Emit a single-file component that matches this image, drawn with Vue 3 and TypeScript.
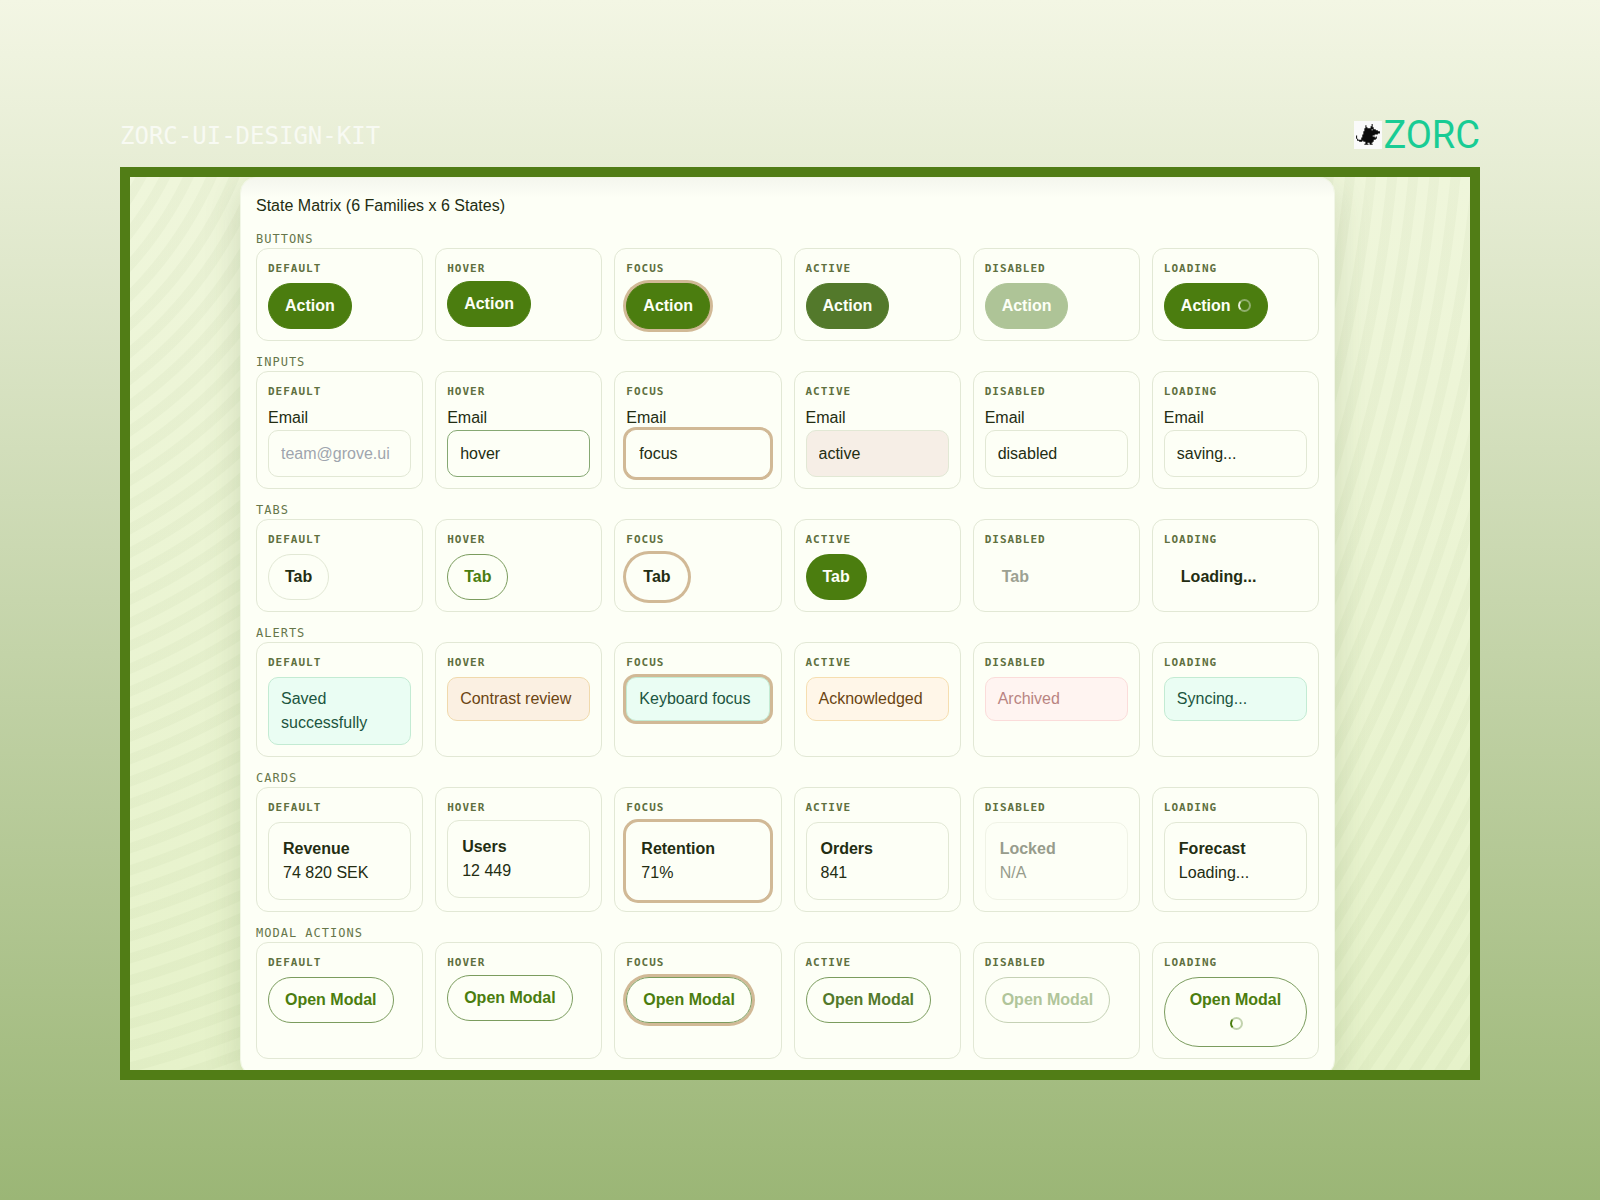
<script setup lang="ts">
type State = 'default' | 'hover' | 'focus' | 'active' | 'disabled' | 'loading'
type Kind = 'button' | 'input' | 'tab' | 'alert' | 'card' | 'modal'

interface Item {
  text: string
  tone?: string
  value?: string
}

interface Family {
  title: string
  kind: Kind
  items: Item[]
}

const states: State[] = ['default', 'hover', 'focus', 'active', 'disabled', 'loading']

const families: Family[] = [
  { title: 'Buttons', kind: 'button', items: states.map(() => ({ text: 'Action' })) },
  {
    title: 'Inputs',
    kind: 'input',
    items: ['', 'hover', 'focus', 'active', 'disabled', 'saving...'].map((value) => ({ text: 'Email', value })),
  },
  {
    title: 'Tabs',
    kind: 'tab',
    items: ['Tab', 'Tab', 'Tab', 'Tab', 'Tab', 'Loading...'].map((text) => ({ text })),
  },
  {
    title: 'Alerts',
    kind: 'alert',
    items: [
      { text: 'Saved successfully', tone: 'success' },
      { text: 'Contrast review', tone: 'warning' },
      { text: 'Keyboard focus', tone: 'success' },
      { text: 'Acknowledged', tone: 'warning' },
      { text: 'Archived', tone: 'danger' },
      { text: 'Syncing...', tone: 'success' },
    ],
  },
  {
    title: 'Cards',
    kind: 'card',
    items: [
      { text: 'Revenue', value: '74 820 SEK' },
      { text: 'Users', value: '12 449' },
      { text: 'Retention', value: '71%' },
      { text: 'Orders', value: '841' },
      { text: 'Locked', value: 'N/A' },
      { text: 'Forecast', value: 'Loading...' },
    ],
  },
  { title: 'Modal Actions', kind: 'modal', items: states.map(() => ({ text: 'Open Modal' })) },
]
</script>

<template>
  <main class="page">
    <header class="top">
      <span class="kit">ZORC-UI-DESIGN-KIT</span>
      <div class="brand">
        <svg class="mascot" viewBox="0 0 27 27" aria-hidden="true">
          <rect width="27" height="27" fill="#fafafa" />
          <path
            fill="#0b0b0b"
            d="M11 4h1v2h1v1h3V5h1V3h1v3h1v2h2v1h2v1h2v2h-2v1h-3v1h-2v1h2v1h1v-1h1v2h-1v1h-2v2h-1v1h-1v1h1v1h-3v-2h-2v1h1v1h-4v-1h1v-2H9v-1H8v1H5v-1H3v-2H2v-3h1v3h1v1h3v-2h1v-3h1v-3h1V7h1z"
          />
          <rect x="17" y="8" width="1" height="1" fill="#fafafa" />
        </svg>
        <span class="wordmark">ZORC</span>
      </div>
    </header>

    <div class="frame">
      <section class="panel">
        <h1 class="title">State Matrix (6 Families x 6 States)</h1>
        <section v-for="family in families" :key="family.title" class="family">
          <h2 class="family-title">{{ family.title }}</h2>
          <div class="row">
            <div v-for="(item, i) in family.items" :key="states[i]" class="cell">
              <h3 class="state">{{ states[i] }}</h3>

              <button
                v-if="family.kind === 'button' || family.kind === 'modal'"
                type="button"
                class="btn"
                :class="[family.kind === 'modal' ? 'outline' : 'solid', 'is-' + states[i]]"
                :disabled="states[i] === 'disabled'"
              >
                {{ item.text }} <span v-if="states[i] === 'loading'" class="spinner"></span>
              </button>

              <template v-else-if="family.kind === 'input'">
                <label class="label" :for="'email-' + states[i]">{{ item.text }}</label>
                <input
                  :id="'email-' + states[i]"
                  class="field"
                  :class="'is-' + states[i]"
                  type="text"
                  placeholder="team@grove.ui"
                  :value="item.value"
                  :disabled="states[i] === 'disabled'"
                />
              </template>

              <button
                v-else-if="family.kind === 'tab'"
                type="button"
                class="btn tab"
                :class="'is-' + states[i]"
                :disabled="states[i] === 'disabled'"
              >
                {{ item.text }}
              </button>

              <div v-else-if="family.kind === 'alert'" class="alert" :class="[item.tone, 'is-' + states[i]]">
                {{ item.text }}
              </div>

              <article v-else class="card" :class="'is-' + states[i]">
                <strong>{{ item.text }}</strong>
                <span>{{ item.value }}</span>
              </article>
            </div>
          </div>
        </section>
      </section>
    </div>
  </main>
</template>

<style>
body {
  margin: 0;
}
</style>

<style scoped>
.page {
  --primary: #4b7d0f;
  --ink: #232d12;
  --line: #e2e8d5;
  --surface: #fdfff6;
  --ring: 0 0 0 3px #d1b996;
  box-sizing: border-box;
  min-height: 100vh;
  padding: 120px 120px 0;
  background: linear-gradient(#f3f6e4, #9bb676);
  color: var(--ink);
  font: 16px/24px 'Liberation Sans', Arial, sans-serif;
}

.page * {
  box-sizing: border-box;
}

.top {
  display: flex;
  justify-content: space-between;
  align-items: flex-start;
  height: 47px;
}

.kit {
  color: #f8faf3;
  font: 24px/32px 'DejaVu Sans Mono', monospace;
}

.brand {
  display: flex;
  align-items: center;
  gap: 1px;
}

.mascot {
  width: 28px;
  height: 28px;
}

.wordmark {
  color: #19cc94;
  font: 38px/30px Roboto, sans-serif;
}

.frame {
  overflow: hidden;
  padding: 0 135px 0 110px;
  border: 10px solid #517d16;
  background:
    repeating-radial-gradient(circle at -278px -160px, transparent 0 10px, rgba(90, 120, 50, 0.04) 11px 20px, transparent 21px),
    linear-gradient(#eff6db, #e6f2ca);
}

.panel {
  margin-bottom: -6px;
  padding: 16px 15px;
  border: 1px solid #f1f6e6;
  border-radius: 16px;
  background: linear-gradient(#f4f6ee, var(--surface) 20px);
  box-shadow: 0 10px 36px rgba(60, 90, 30, 0.17);
}

.title,
.family-title,
.state {
  margin: 0;
}

.title {
  font-size: 16px;
  font-weight: 400;
  line-height: 24px;
}

.family {
  margin-top: 12px;
}

.family-title {
  color: #66764a;
  font: 12px/18px 'DejaVu Sans Mono', monospace;
  letter-spacing: 1px;
  text-transform: uppercase;
}

.row {
  display: grid;
  grid-template-columns: repeat(6, minmax(0, 1fr));
  gap: 12px;
}

.cell {
  display: flex;
  flex-direction: column;
  align-items: flex-start;
  padding: 11px;
  border: 1px solid var(--line);
  border-radius: 12px;
}

.state {
  margin-bottom: 5px;
  color: #5f7040;
  font: bold 11px/18px 'DejaVu Sans Mono', monospace;
  letter-spacing: 1px;
  text-transform: uppercase;
}

.btn {
  padding: 10px 16px;
  border: 1px solid transparent;
  border-radius: 36px;
  background: transparent;
  font: bold 16px/24px 'Liberation Sans', Arial, sans-serif;
}

.solid {
  border-color: var(--primary);
  background: var(--primary);
  color: var(--surface);
}

.solid.is-active {
  border-color: #53792b;
  background: #53792b;
}

.solid.is-disabled {
  border-color: #aec497;
  background: #aec497;
}

.outline {
  border-color: #7b9c5e;
  color: var(--primary);
}

.outline.is-active {
  color: #53792b;
}

.outline.is-disabled {
  border-color: #c5d1b5;
  color: #b0c59a;
}

.btn.is-hover,
.card.is-hover {
  transform: translateY(-2px);
}

.is-focus {
  box-shadow: var(--ring);
}

.spinner {
  display: inline-block;
  width: 13px;
  height: 13px;
  margin-left: 3px;
  border: 2px solid #8fae6c;
  border-left-color: #e9f0de;
  border-radius: 50%;
  vertical-align: -1px;
}

.outline .spinner {
  border-color: #c2d3ae;
  border-left-color: var(--primary);
}

.tab {
  color: var(--ink);
}

.tab.is-default {
  border-color: var(--line);
}

.tab.is-hover {
  border-color: #7b9c5e;
  color: var(--primary);
  transform: none;
}

.tab.is-active {
  background: var(--primary);
  color: var(--surface);
}

.tab.is-disabled {
  color: #9ca192;
}

.field {
  width: 100%;
  height: 47px;
  padding: 0 12px;
  border: 1px solid var(--line);
  border-radius: 10px;
  outline: 0;
  background: var(--surface);
  color: var(--ink);
  font: 16px/24px 'Liberation Sans', Arial, sans-serif;
}

.field::placeholder {
  color: #9fa5ae;
  opacity: 1;
}

.field.is-hover {
  border-color: #86a873;
}

.field.is-focus,
.card.is-focus {
  border-color: var(--surface);
}

.field.is-active {
  background: #f6eee6;
}

.alert {
  width: 100%;
  padding: 9px 12px;
  border: 1px solid;
  border-radius: 10px;
}

.success {
  border-color: #c3ebd3;
  background: #eafdf3;
  color: #1c5540;
}

.warning {
  border-color: #f6deb0;
  background: #fff6e8;
  color: #6b4513;
}

.warning.is-hover {
  border-color: #f0d9ac;
  background: #fbf0e2;
}

.danger {
  border-color: #fbdcda;
  background: #fff4f1;
  color: #b98482;
}

.card {
  display: flex;
  flex-direction: column;
  width: 100%;
  padding: 14px;
  border: 1px solid var(--line);
  border-radius: 12px;
  background: var(--surface);
}

.card.is-disabled {
  border-color: #f0f3e6;
  color: #979c8c;
}
</style>
